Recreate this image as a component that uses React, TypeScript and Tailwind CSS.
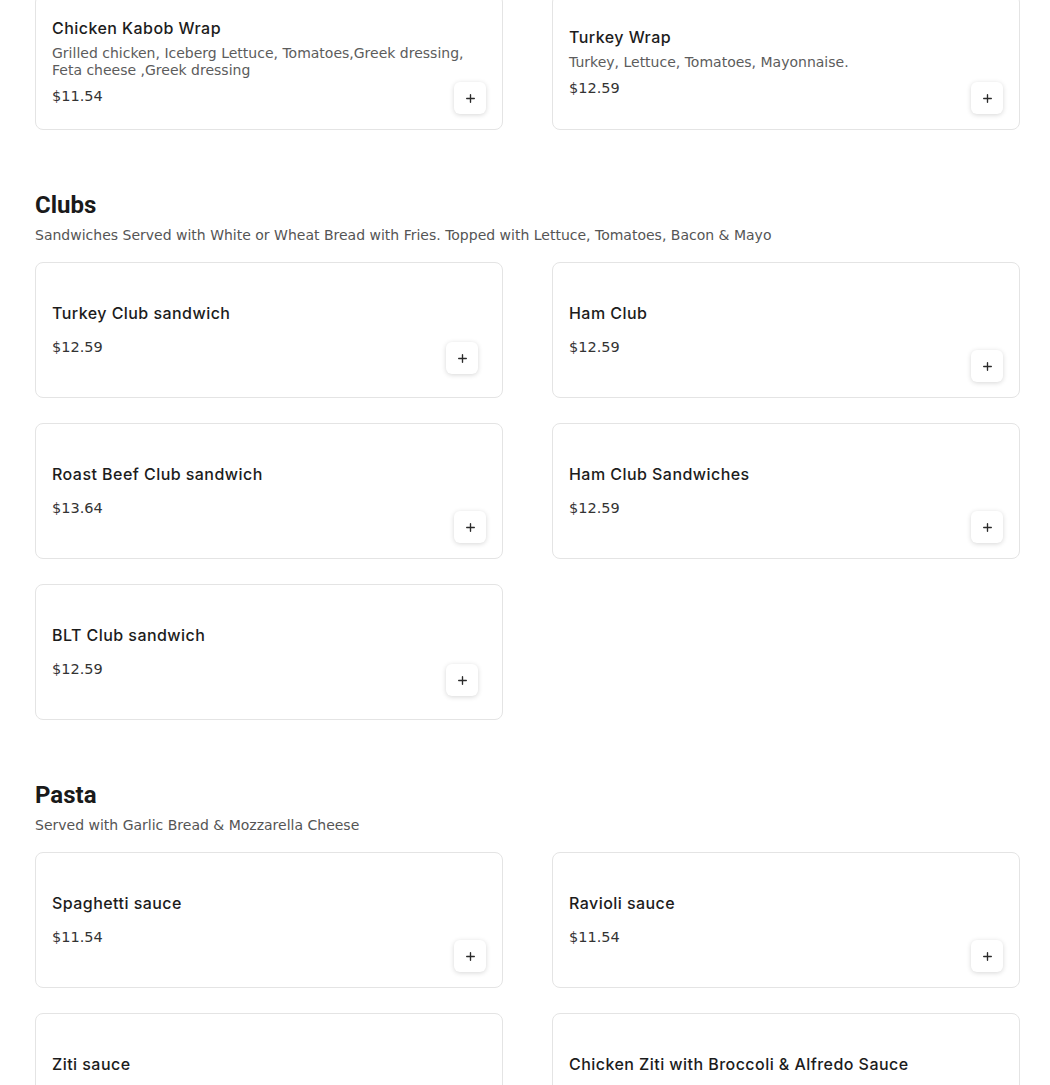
import { Plus } from "lucide-react";

type Item = { name: string; desc?: string; price: string; inset?: boolean };
type Section = { title?: string; note?: string; items: Item[] };

const sections: Section[] = [
  {
    items: [
      {
        name: "Chicken Kabob Wrap",
        desc: "Grilled chicken, Iceberg Lettuce, Tomatoes,Greek dressing, Feta cheese ,Greek dressing",
        price: "$11.54",
      },
      { name: "Turkey Wrap", desc: "Turkey, Lettuce, Tomatoes, Mayonnaise.", price: "$12.59" },
    ],
  },
  {
    title: "Clubs",
    note: "Sandwiches Served with White or Wheat Bread with Fries. Topped with Lettuce, Tomatoes, Bacon & Mayo",
    items: [
      { name: "Turkey Club sandwich", price: "$12.59", inset: true },
      { name: "Ham Club", price: "$12.59" },
      { name: "Roast Beef Club sandwich", price: "$13.64" },
      { name: "Ham Club Sandwiches", price: "$12.59" },
      { name: "BLT Club sandwich", price: "$12.59", inset: true },
    ],
  },
  {
    title: "Pasta",
    note: "Served with Garlic Bread & Mozzarella Cheese",
    items: [
      { name: "Spaghetti sauce", price: "$11.54" },
      { name: "Ravioli sauce", price: "$11.54" },
      { name: "Ziti sauce", price: "$11.54" },
      { name: "Chicken Ziti with Broccoli & Alfredo Sauce", price: "$14.69" },
    ],
  },
];

const body = "font-['DejaVu_Sans','Open_Sans',sans-serif]";

function Card({ item }: { item: Item }) {
  return (
    <div className="relative flex h-[136px] w-[468px] items-center rounded-[8px] border border-[#e4e4e4] bg-white pl-[16px] pr-[30px]">
      <div className="flex flex-col">
        <div className="font-['Inter',sans-serif] text-[16px] leading-[20px] font-medium tracking-[0.45px] text-[#1c1c1c]">
          {item.name}
        </div>
        {item.desc && (
          <div className={`${body} mt-[7px] text-[14px] leading-[17px] text-[#5c5c5c]`}>{item.desc}</div>
        )}
        <div className={`${body} ${item.desc ? "mt-[7px]" : "mt-[14px]"} text-[14.5px] leading-[20px] text-[#333333]`}>
          {item.price}
        </div>
      </div>
      <button
        className={`absolute flex h-[32px] w-[32px] items-center justify-center rounded-[6px] bg-white shadow-[0_1px_5px_rgba(0,0,0,0.16)] ${
          item.inset ? "right-[24px] bottom-[23px]" : "right-[16px] bottom-[15px]"
        }`}
      >
        <Plus size={13} strokeWidth={2.5} className="text-[#2b2b2b]" />
      </button>
    </div>
  );
}

export default function App() {
  return (
    <div className="min-h-screen overflow-hidden bg-white pl-[35px]">
      <div className="-mt-[6px]">
        {sections.map((s, i) => (
          <section key={i} className={i === 0 ? "" : "mt-[61px]"}>
            {s.title && (
              <>
                <h2 className="font-['Roboto',sans-serif] text-[24px] leading-[28px] font-bold text-[#1a1a1a]">{s.title}</h2>
                <p className={`${body} mt-[6px] text-[14px] leading-[20px] text-[#555555]`}>{s.note}</p>
              </>
            )}
            <div className={`grid grid-cols-[468px_468px] gap-x-[49px] gap-y-[25px] ${s.title ? "mt-[17px]" : ""}`}>
              {s.items.map((it) => (
                <Card key={it.name} item={it} />
              ))}
            </div>
          </section>
        ))}
      </div>
    </div>
  );
}
